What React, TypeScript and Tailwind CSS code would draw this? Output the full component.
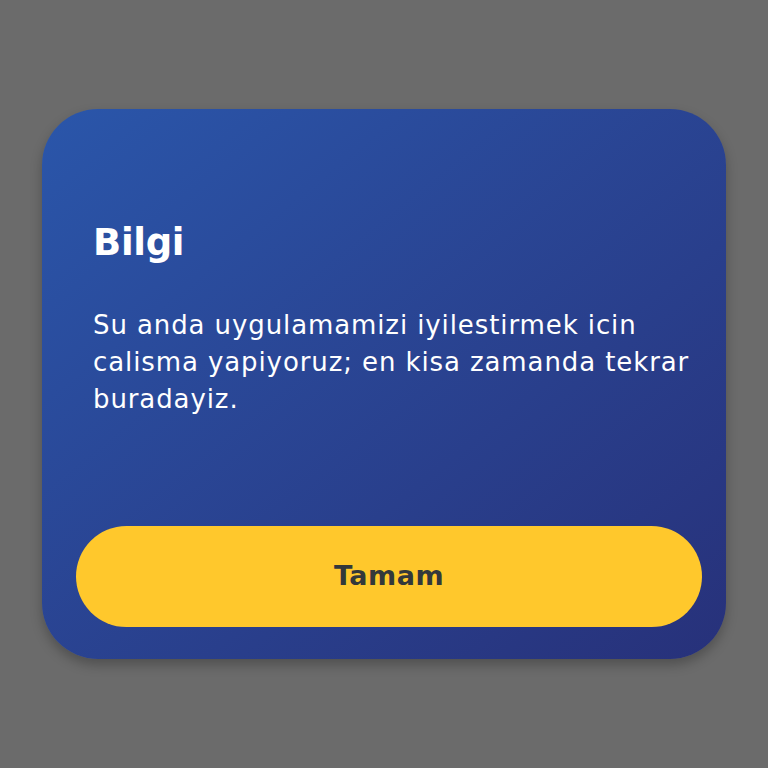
export default function App() {
  return (
    <div className="w-full h-screen bg-[#6b6b6b] flex items-center justify-center" style={{ fontFamily: '"DejaVu Sans", "Noto Sans", sans-serif' }}>
      <div className="w-[684px] h-[550px] rounded-[56px] bg-gradient-to-br from-[#2a56aa] to-[#27317a] shadow-[0_6px_12px_rgba(0,0,0,0.25)] flex flex-col pt-[112px] pb-[32px] pl-[34px] pr-[24px]">
        <div className="pl-[17px] w-[640px]">
          <h1 className="text-white font-bold text-[37px] leading-[44px] tracking-[-0.3px]">Bilgi</h1>
          <p className="text-white text-[26px] leading-[37px] mt-[42px] tracking-[0.9px] w-[620px]">
            Su anda uygulamamizi iyilestirmek icin calisma yapiyoruz; en kisa zamanda tekrar buradayiz.
          </p>
        </div>
        <div className="flex-1" />
        <button className="h-[101px] w-full rounded-full bg-[#ffc82c] text-[#33383b] font-bold text-[27px] tracking-[0.5px]">Tamam</button>
      </div>
    </div>
  );
}
